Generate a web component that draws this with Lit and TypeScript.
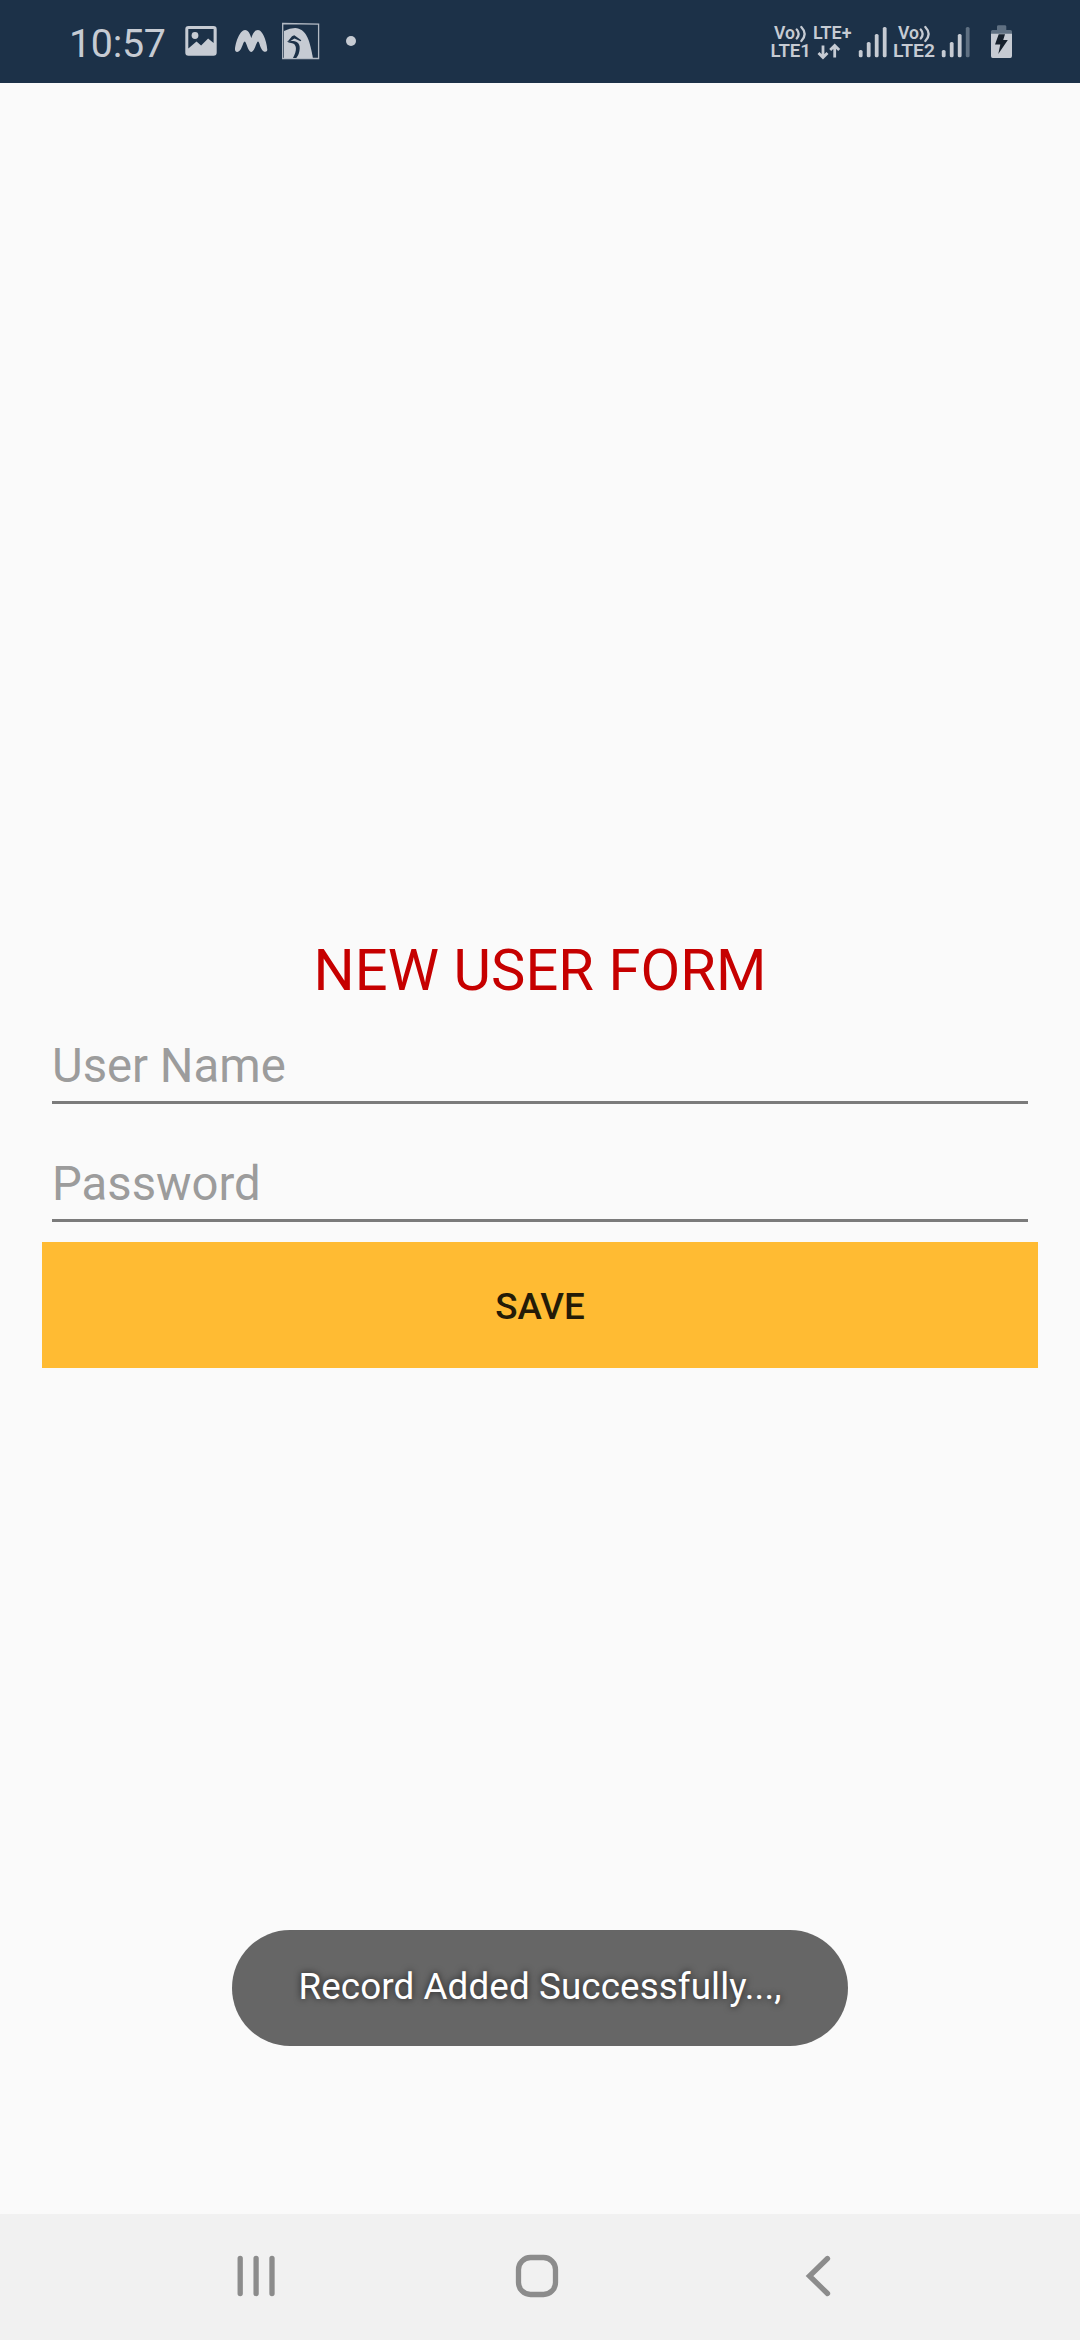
import { LitElement, html, css, svg } from "lit";
import { customElement, property } from "lit/decorators.js";

@customElement("status-bar")
class StatusBar extends LitElement {
  static styles = css`
    :host {
      display: flex;
      justify-content: space-between;
      height: 83px;
      background: #1c3148;
      color: #c6cbd3;
      font-family: Roboto, "Liberation Sans", sans-serif;
    }
    .left,
    .right {
      display: flex;
      align-items: flex-start;
    }
    .left {
      padding-left: 69px;
    }
    .clock {
      width: 111px;
      font-size: 39.4px;
      line-height: 46px;
      letter-spacing: -0.3px;
      padding-top: 21px;
      white-space: nowrap;
    }
    .right {
      padding-right: 60px;
    }
    svg {
      display: block;
    }
    .net {
      font-size: 18.4px;
      font-weight: 600;
    }
  `;

  private signal(x: number, dimLast: boolean) {
    return [50, 42, 34, 27].map(
      (top, i) => svg`<rect x=${x + i * 8} y=${top} width="3.8" height=${57.3 - top} rx="1.6"
        fill=${dimLast && i === 3 ? "#5f7082" : "#c6cbd3"} />`
    );
  }

  private voice(x: number) {
    return svg`<text x=${x} y="39.3" textLength="21" lengthAdjust="spacingAndGlyphs">Vo</text>
      <g fill="none" stroke="#c6cbd3" stroke-width="2.3" stroke-linecap="round">
        <path d="M${x + 22.7} 29.5Q${x + 26.6} 34 ${x + 22.7} 38.5" />
        <path d="M${x + 27.3} 27Q${x + 34} 34 ${x + 27.3} 41" />
      </g>`;
  }

  render() {
    return html`
      <div class="left">
        <span class="clock">10:57</span>
        <svg width="180" height="83" viewBox="180 0 180 83" fill="#c6cbd3">
          <path fill-rule="evenodd" d="M188.5 26h25a3.2 3.2 0 0 1 3.2 3.2v23.3a3.2 3.2 0 0 1-3.2 3.2h-25a3.2 3.2 0 0 1-3.2-3.2V29.2a3.2 3.2 0 0 1 3.2-3.2zM188.300 29v19.500l8.200-7 4.600 3.900 7-6.900 5.500 4.500V29z" />
          <circle cx="195" cy="35.500" r="3.400" />
          <path d="M235 49.500C235.500 42 240 30 245 30C248.500 30 250 34 251.300 38C252.600 34 254.500 30 258 30C263 30 267 43 267.300 49.500C267.400 52.800 263.500 52.500 261.800 49.500C259.500 45.800 259.300 41.500 258 41.500C256.500 41.500 254.500 52 251.200 52C248 52 246.300 41.500 244.800 41.500C243.400 41.500 242.700 46 240.600 49.500C238.700 52.700 235 52.800 235 49.500Z" />
          <path d="M282.700 23.500L318.600 24.200V58.500H282.700Z" fill="none" stroke="#b3bac4" stroke-width="1.300" />
          <path d="M284 31Q291 27.600 297 28.200C307 30 310 42 312.900 58H284Z" />
          <path d="M292 36.300L294.300 35.200L301.300 40.300L300.600 41.300L294.500 38.400L290 41.300L287.500 41.800Z" fill="#1c3148" />
          <path d="M287 41.600C292 40.200 300.300 40.500 299.700 48.500Q299.500 54 296.300 58H293C297 51 297.500 43.700 291 43.100Q288.500 43 287 41.600Z" fill="#1c3148" />
          <circle cx="351" cy="41" r="5" />
        </svg>
      </div>
      <div class="right">
        <svg class="net" width="260" height="83" viewBox="760 0 260 83" fill="#c6cbd3">
          ${this.voice(774)}
          <text x="770.500" y="57.300" textLength="40.500" lengthAdjust="spacingAndGlyphs">LTE1</text>
          <text x="813" y="39.300" textLength="38.500" lengthAdjust="spacingAndGlyphs">LTE+</text>
          <path d="M823 45.500V57.500M818.500 53L823 57.500L827.500 53M834.700 57.500V45.500M830.200 50L834.700 45.500L839.200 50" fill="none" stroke="#c6cbd3" stroke-width="2.800" />
          ${this.signal(858.8, false)}
          ${this.voice(898)}
          <text x="893" y="57.300" textLength="42" lengthAdjust="spacingAndGlyphs">LTE2</text>
          ${this.signal(941.8, true)}
          <path d="M997 34V26.500Q997 25.300 998.500 25.300H1004.800Q1006.300 25.300 1006.300 26.500V30H1010.500Q1012 30 1012 31.500V34H991V31.500Q991 30 992.500 30H997Z" fill="#5f7082" />
          <path d="M991 33.800H1012V56Q1012 58 1010.300 58H992.700Q991 58 991 56Z" />
          <path d="M998.700 34.300H1005L1003.200 40H1007.800L998.300 54L1000.300 44.500H995Z" fill="#15202c" />
        </svg>
      </div>
    `;
  }
}

@customElement("form-field")
class FormField extends LitElement {
  @property() label = "";
  @property() type = "text";
  static styles = css`
    :host {
      display: block;
      height: 118px;
      padding: 0 10px;
    }
    .field {
      display: block;
      box-sizing: border-box;
      width: 100%;
      height: 86px;
      padding: 12px 0 0;
      border: 0;
      border-bottom: 3px solid #7b7b7b;
      border-radius: 0;
      outline: none;
      background: transparent;
      font: 47.25px/56px Roboto, "Liberation Sans", sans-serif;
      color: #222;
    }
    .field::placeholder {
      color: #9c9c9c;
      opacity: 1;
    }
  `;
  render() {
    return html`<input class="field" type=${this.type} placeholder=${this.label} />`;
  }
}

@customElement("nav-bar")
class NavBar extends LitElement {
  static styles = css`
    :host {
      display: flex;
      align-items: flex-start;
      justify-content: space-between;
      box-sizing: border-box;
      height: 126px;
      padding: 38px 238px 0 232px;
      background: #f1f1f1;
    }
    svg {
      display: block;
      fill: none;
      stroke: #8c8c8c;
      stroke-width: 5.3;
    }
  `;
  render() {
    return html`
      <svg width="48" height="48" viewBox="232 2252 48 48" stroke-linecap="round">
        <path d="M240.200 2258.300V2293.500M256.100 2258.300V2293.500M272 2258.300V2293.500" />
      </svg>
      <svg width="48" height="48" viewBox="513 2252 48 48">
        <rect x="518.500" y="2257.500" width="37" height="37" rx="12" />
      </svg>
      <svg width="48" height="48" viewBox="794 2252 48 48" stroke-linecap="round">
        <path d="M827.500 2258.500L809.500 2276L827.500 2293.500" />
      </svg>
    `;
  }
}

@customElement("app-root")
class AppRoot extends LitElement {
  static styles = css`
    :host {
      display: flex;
      flex-direction: column;
      position: relative;
      height: 2340px;
      width: 1080px;
      background: #fafafa;
      font-family: Roboto, "Liberation Sans", sans-serif;
    }
    .form {
      flex: 1;
      display: flex;
      flex-direction: column;
      padding: 853px 42px 0;
    }
    .title {
      margin: 0;
      height: 82px;
      font-size: 57.75px;
      line-height: 68px;
      font-weight: 400;
      letter-spacing: 0.1px;
      text-align: center;
      color: #c60000;
    }
    .save {
      flex: none;
      height: 126px;
      margin: -12px 0 0;
      padding: 2px 0 0;
      border: 0;
      background: #ffbb33;
      color: #241b07;
      font: 500 36.75px/43px Roboto, "Liberation Sans", sans-serif;
    }
    .toast {
      position: absolute;
      left: 232px;
      top: 1930px;
      box-sizing: border-box;
      width: 616px;
      height: 116px;
      border-radius: 58px;
      background: #666;
      color: #fff;
      font-size: 36.75px;
      line-height: 114px;
      letter-spacing: 0.12px;
      text-align: center;
      white-space: nowrap;
      text-shadow: 0 0 7px rgba(0, 0, 0, 0.7);
    }
  `;

  render() {
    return html`
      <status-bar></status-bar>
      <main class="form">
        <h1 class="title">NEW USER FORM</h1>
        <form-field label="User Name"></form-field>
        <form-field label="Password" type="password"></form-field>
        <button class="save">SAVE</button>
      </main>
      <nav-bar></nav-bar>
      <div class="toast" role="status">Record Added Successfully...,</div>
    `;
  }
}
